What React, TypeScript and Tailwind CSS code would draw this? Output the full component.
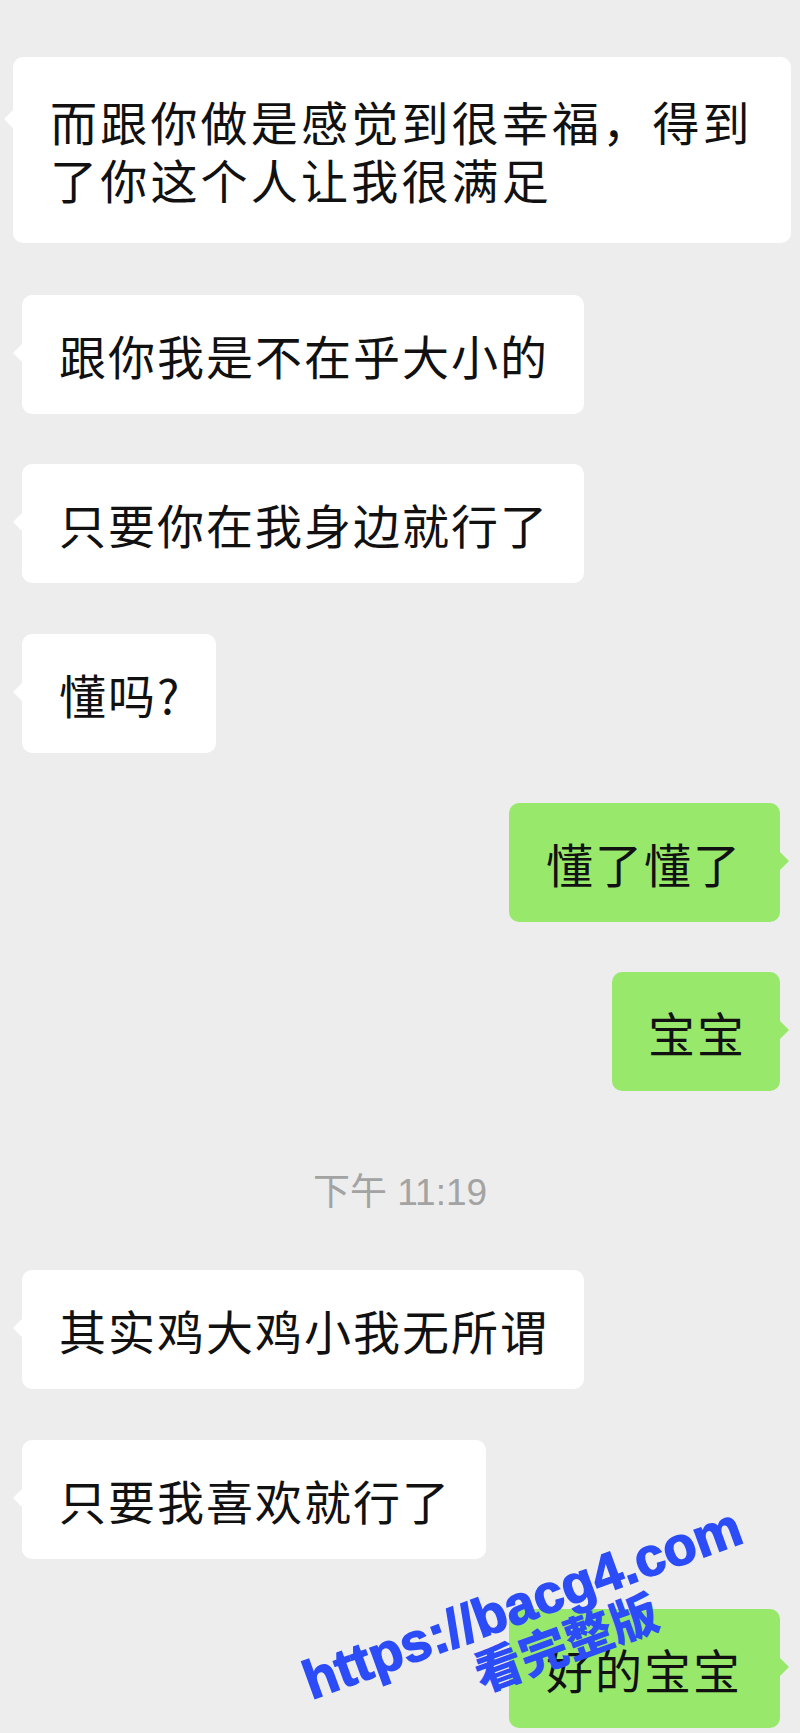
const cjk = "font-['Noto_Sans_CJK_SC','Noto_Sans',sans-serif]";

type Side = "left" | "right";

const Bubble = ({ side, text, className = "" }: { side: Side; text: string; className?: string }) => {
  const isLeft = side === "left";
  return (
    <div
      className={`relative flex h-[119px] items-center rounded-[10px] text-[47px] leading-[58px] tracking-[2px] text-[#111] ${cjk} ${
        isLeft ? "bg-white" : "bg-[#98e86b]"
      } ${className}`}
    >
      {isLeft ? (
        <span className="absolute -left-[9px] top-[48px] h-0 w-0 border-y-[10px] border-r-[10px] border-y-transparent border-r-white" />
      ) : (
        <span className="absolute -right-[9px] top-[48px] h-0 w-0 border-y-[10px] border-l-[10px] border-y-transparent border-l-[#98e86b]" />
      )}
      {text}
    </div>
  );
};

export default function App() {
  return (
    <div className="relative h-[1733px] w-[800px] overflow-hidden bg-[#ededed]">
      <div className="flex flex-col pt-[57px]">
        {/* long message */}
        <div className="pl-[13px]">
          <div
            className={`relative w-[778px] rounded-[10px] bg-white pl-[37px] pr-[34px] py-[35px] text-[47px] leading-[58px] tracking-[3.2px] text-[#111] ${cjk}`}
          >
            <span className="absolute -left-[9px] top-[52px] h-0 w-0 border-y-[10px] border-r-[10px] border-y-transparent border-r-white" />
            而跟你做是感觉到很幸福，得到了你这个人让我很满足
          </div>
        </div>

        <div className="mt-[52px] flex pl-[22px]">
          <Bubble side="left" text="跟你我是不在乎大小的" className="pl-[37px] pr-[35px]" />
        </div>
        <div className="mt-[50px] flex pl-[22px]">
          <Bubble side="left" text="只要你在我身边就行了" className="pl-[37px] pr-[35px]" />
        </div>
        <div className="mt-[51px] flex pl-[22px]">
          <Bubble side="left" text="懂吗?" className="pl-[37px] pr-[35px]" />
        </div>

        <div className="mt-[50px] flex justify-end pr-[20px]">
          <Bubble side="right" text="懂了懂了" className="pl-[37px] pr-[38px]" />
        </div>
        <div className="mt-[50px] flex justify-end pr-[20px]">
          <Bubble side="right" text="宝宝" className="pl-[36px] pr-[34px]" />
        </div>

        <div
          className={`mt-[82px] text-center text-[37px] leading-[40px] text-[#a3a3a3] font-['Liberation_Sans','Noto_Sans_CJK_SC',sans-serif]`}
        >
          下午 11:19
        </div>

        <div className="mt-[57px] flex pl-[22px]">
          <Bubble side="left" text="其实鸡大鸡小我无所谓" className="pl-[37px] pr-[35px]" />
        </div>
        <div className="mt-[51px] flex pl-[22px]">
          <Bubble side="left" text="只要我喜欢就行了" className="pl-[37px] pr-[35px]" />
        </div>
        <div className="mt-[50px] flex justify-end pr-[20px]">
          <Bubble side="right" text="好的宝宝" className="pl-[37px] pr-[38px]" />
        </div>
      </div>

      {/* watermark */}
      <div className="absolute left-[522px] top-[1603px] -translate-x-1/2 -translate-y-1/2 rotate-[-20deg] whitespace-nowrap font-['Liberation_Sans',sans-serif] text-[54px] font-bold leading-none text-[#2b4cf7] [-webkit-text-stroke:1.5px_#2b4cf7]">
        https://bacg4.com
      </div>
      <div
        className={`absolute left-[565px] top-[1640px] -translate-x-1/2 -translate-y-1/2 rotate-[-20deg] whitespace-nowrap text-[48px] font-black leading-none text-[#2b4cf7] ${cjk}`}
      >
        看完整版
      </div>
    </div>
  );
}
